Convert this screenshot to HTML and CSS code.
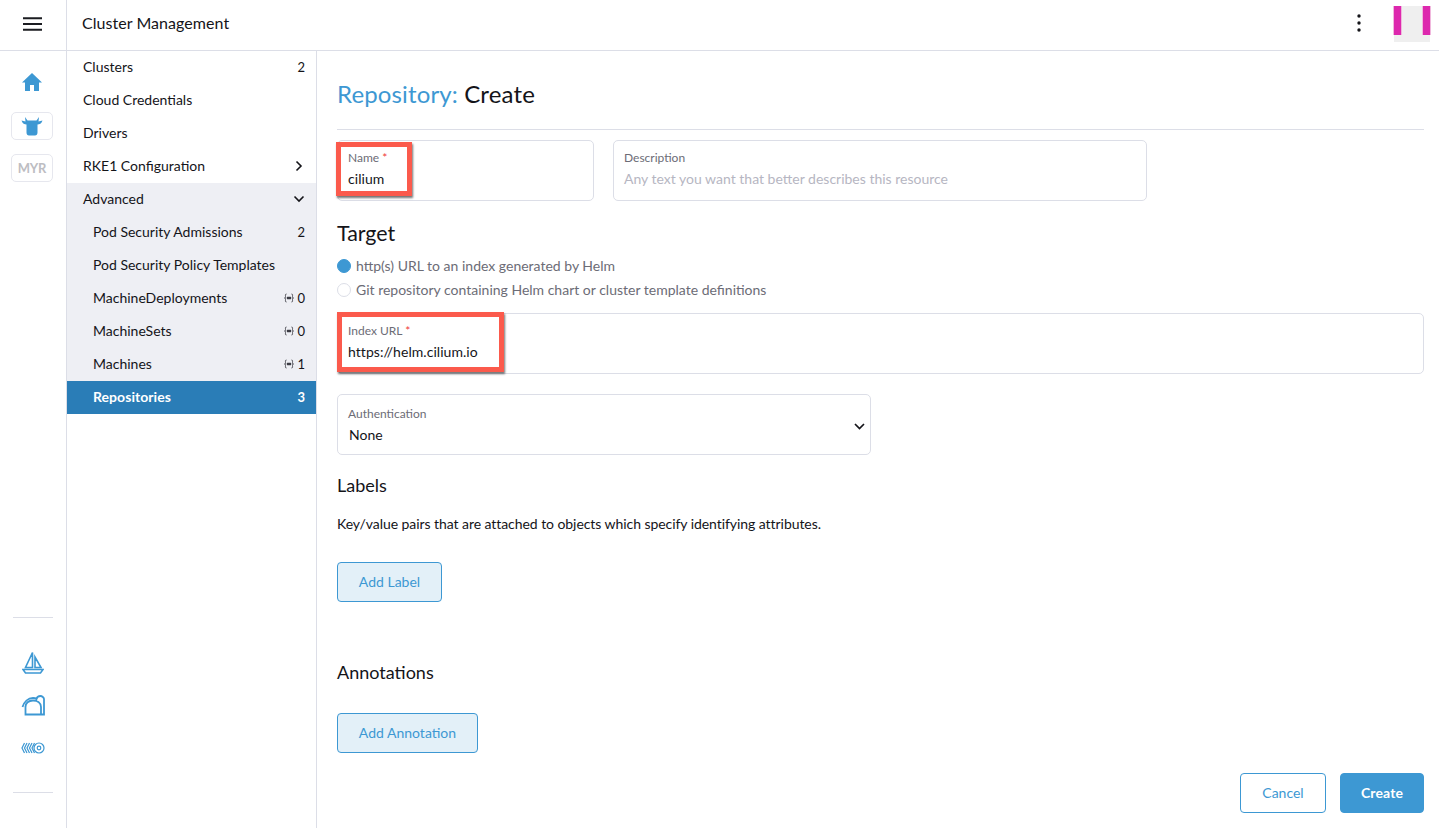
FILE: index.html
```html
<!DOCTYPE html>
<html lang="en">
<head>
<meta charset="utf-8">
<title>Repository: Create</title>
<link rel="stylesheet" href="styles.css">
</head>
<body>
<div class="app">
  <header class="top">
    <div class="burger"><svg width="20" height="14" viewBox="0 0 20 14"><path d="M0 1.2h19M0 7h19M0 12.8h19" stroke="#1b1c21" stroke-width="2"/></svg></div>
    <div class="product">Cluster Management</div>
    <div class="top-right">
      <svg class="kebab" width="4" height="18" viewBox="0 0 4 18"><circle cx="2" cy="2" r="1.7"/><circle cx="2" cy="9" r="1.7"/><circle cx="2" cy="16" r="1.7"/></svg>
      <div class="avatar"><span class="av-bar"></span><span class="av-bar"></span></div>
    </div>
  </header>
  <nav class="rail">
    <div class="rail-top">
      <svg class="home" width="22" height="20" viewBox="0 0 22 20"><path fill="#3d98d3" d="M11 1 1 10.500h3V19h5v-6h4v6h5v-8.500h3z"/></svg>
      <div class="chip"><svg width="22" height="20" viewBox="0 0 22 20"><path fill="#3d98d3" d="M.5 4.500 4.500 5.500 4 1l2.500 3.500h9L18 1l-.5 4.500 4-1C20.500 7.500 18.500 8.500 16.500 8.500v8c0 2-1 3-2.500 3H8c-1.500 0-2.500-1-2.500-3v-8C3.500 8.500 1.500 7.500.5 4.500z"/></svg></div>
      <div class="chip chip-text">MYR</div>
    </div>
    <div class="rail-bottom">
      <svg class="ic-boat" width="22" height="24" viewBox="0 0 22 24" fill="none" stroke="#3d98d3" stroke-width="1.600"><path d="M10.500 1.500 3.500 16.500h7zM13 6v10.500h6zM1 18.500h20l-2.500 3.500H3.500z"/></svg>
      <svg class="ic-arch" width="24" height="21" viewBox="0 0 24 21" fill="none" stroke="#3d98d3" stroke-width="1.800"><path d="M1.500 12C3 7 7 3 12 3c1.500 0 3 .5 3.500 1C16 2 18 1 19.500 1S23 2.500 23 4v15.500H4.500V11M4.500 19.500V12c0-4 3-6.500 7.500-6.500S20 8 20 12v7.500"/></svg>
      <svg class="ic-wheat" width="24" height="14" viewBox="0 0 24 14" fill="none" stroke="#3d98d3" stroke-width="1.200"><path d="M3.500 2 1 7l2.500 5M6 2 3.500 7 6 12M8.500 2 6 7l2.500 5M11 2 8.500 7l2.500 5M13.500 2 11 7l2.500 5"/><circle cx="18" cy="7" r="5"/><circle cx="18" cy="7" r="1.800"/></svg>
    </div>
  </nav>
  <aside class="side">
    <a class="item"><span>Clusters</span><span class="count">2</span></a>
    <a class="item"><span>Cloud Credentials</span></a>
    <a class="item"><span>Drivers</span></a>
    <a class="item"><span>RKE1 Configuration</span><svg class="chev" width="8" height="12" viewBox="0 0 8 12"><path d="m1.500 1.500 4.500 4.500-4.500 4.500" fill="none" stroke="#141419" stroke-width="1.600"/></svg></a>
    <div class="group">
      <a class="item"><span>Advanced</span><svg class="chev-d" width="12" height="8" viewBox="0 0 12 8"><path d="m1.500 1.500 4.500 4.500 4.500-4.500" fill="none" stroke="#141419" stroke-width="1.600"/></svg></a>
      <a class="item sub"><span>Pod Security Admissions</span><span class="count">2</span></a>
      <a class="item sub"><span>Pod Security Policy Templates</span></a>
      <a class="item sub"><span>MachineDeployments</span><span class="count"><svg class="ns" width="10" height="10" viewBox="0 0 10 10"><path d="M2.500 1C1 1 1.500 2.500 1.500 3.500S1.500 5 .5 5c1 0 1 .5 1 1.500S1 9 2.500 9M7.500 1C9 1 8.500 2.500 8.500 3.500S8.500 5 9.500 5c-1 0-1 .5-1 1.500S9 9 7.500 9" fill="none" stroke="#3c3c44" stroke-width=".9"/><rect x="2.800" y="3.800" width="4.400" height="2.400" rx=".6" fill="#3c3c44"/></svg>0</span></a>
      <a class="item sub"><span>MachineSets</span><span class="count"><svg class="ns" width="10" height="10" viewBox="0 0 10 10"><path d="M2.500 1C1 1 1.500 2.500 1.500 3.500S1.500 5 .5 5c1 0 1 .5 1 1.500S1 9 2.500 9M7.500 1C9 1 8.500 2.500 8.500 3.500S8.500 5 9.500 5c-1 0-1 .5-1 1.500S9 9 7.500 9" fill="none" stroke="#3c3c44" stroke-width=".9"/><rect x="2.800" y="3.800" width="4.400" height="2.400" rx=".6" fill="#3c3c44"/></svg>0</span></a>
      <a class="item sub"><span>Machines</span><span class="count"><svg class="ns" width="10" height="10" viewBox="0 0 10 10"><path d="M2.500 1C1 1 1.500 2.500 1.500 3.500S1.500 5 .5 5c1 0 1 .5 1 1.500S1 9 2.500 9M7.500 1C9 1 8.500 2.500 8.500 3.500S8.500 5 9.500 5c-1 0-1 .5-1 1.500S9 9 7.500 9" fill="none" stroke="#3c3c44" stroke-width=".9"/><rect x="2.800" y="3.800" width="4.400" height="2.400" rx=".6" fill="#3c3c44"/></svg>1</span></a>
      <a class="item sub active"><span>Repositories</span><span class="count">3</span></a>
    </div>
  </aside>
  <main class="main">
    <h1 class="title"><span class="accent">Repository:</span> Create</h1>
    <div class="name-row">
      <div class="field name">
        <label>Name <em>*</em></label><div class="val">cilium</div>
        <span class="mark mark-name"></span>
      </div>
      <div class="field desc">
        <label>Description</label><div class="val ph">Any text you want that better describes this resource</div>
      </div>
    </div>
    <h2 class="target">Target</h2>
    <div class="radio"><span class="dot on"></span>http(s) URL to an index generated by Helm</div>
    <div class="radio r2"><span class="dot"></span>Git repository containing Helm chart or cluster template definitions</div>
    <div class="field url">
      <label>Index URL <em>*</em></label><div class="val">https://helm.cilium.io</div>
      <span class="mark mark-url"></span>
    </div>
    <div class="field auth">
      <label>Authentication</label><div class="val">None</div>
      <svg class="sel" width="11" height="7" viewBox="0 0 11 7"><path d="m1 1 4.500 4.500L10 1" fill="none" stroke="#141419" stroke-width="1.700"/></svg>
    </div>
    <h3 class="labels">Labels</h3>
    <p class="help">Key/value pairs that are attached to objects which specify identifying attributes.</p>
    <button class="btn soft add-label">Add Label</button>
    <h3 class="annot">Annotations</h3>
    <button class="btn soft add-annot">Add Annotation</button>
    <div class="actions">
      <button class="btn outline cancel">Cancel</button>
      <button class="btn primary create">Create</button>
    </div>
  </main>
</div>
</body>
</html>
```
FILE: styles.css
```css
* { box-sizing: border-box; }
html, body { margin: 0; height: 100%; background: #fff; overflow: hidden; }
body { font-family: Lato, "Open Sans", sans-serif; font-size: 14px; color: #141419; }
.app {
  display: grid;
  grid-template-columns: 67px 250px 1fr;
  grid-template-rows: 51px 777px;
  width: 1439px;
  height: 828px;
}
.top {
  grid-column: 1 / 4;
  display: flex;
  align-items: center;
  border-bottom: 1px solid #dcdee7;
}
.burger {
  width: 67px;
  height: 50px;
  border-right: 1px solid #dcdee7;
  display: flex;
  align-items: center;
  justify-content: center;
}
.burger svg { margin-right: 1px; margin-top: -2px; }
.product { font-size: 16px; letter-spacing: .05px; margin-left: 15px; margin-top: -5px; }
.top-right { margin-left: auto; display: flex; align-items: flex-start; height: 50px; padding-right: 9px; }
.kebab { fill: #141419; margin-top: 14px; margin-right: 33px; }
.avatar {
  width: 36px;
  height: 36px;
  margin-top: 6px;
  background: #efefef;
  display: flex;
  justify-content: space-between;
  align-items: flex-start;
}
.av-bar { width: 7px; height: 29px; background: #dd28ae; box-shadow: 1px 0 0 #f0b8dd, -1px 0 0 #f0b8dd; }
.rail {
  border-right: 1px solid #dcdee7;
  display: flex;
  flex-direction: column;
  align-items: center;
  justify-content: space-between;
  padding: 21px 0 35px;
}
.rail-top { display: flex; flex-direction: column; align-items: center; }
.home { margin-right: 2px; margin-bottom: 20px; }
.chip {
  width: 42px;
  height: 28px;
  border: 1px solid #e6e7ee;
  border-radius: 5px;
  display: flex;
  align-items: center;
  justify-content: center;
  margin-bottom: 14px;
  margin-right: 2px;
}
.chip-text { font-size: 13px; font-weight: 700; color: #bdbdc2; letter-spacing: -.2px; }
.rail-bottom {
  width: 40px;
  height: 176px;
  border-top: 1px solid #dcdee7;
  border-bottom: 1px solid #dcdee7;
  display: flex;
  flex-direction: column;
  align-items: center;
  padding-top: 33px;
}
.ic-arch { margin-top: 20px; }
.ic-wheat { margin-top: 25px; }
.side { border-right: 1px solid #dcdee7; }
.item {
  height: 33px;
  display: flex;
  align-items: center;
  justify-content: space-between;
  padding: 0 11px 1px 16px;
  line-height: 1;
}
.group { background: #eeeff4; }
.chev { margin-right: 2px; }
.chev-d { margin-right: 0; }
.sub { padding-left: 26px; }
.count { display: flex; align-items: center; font-size: 13px; }
.ns { margin-right: 3px; }
.active { background: #2a7db7; color: #fff; font-weight: 700; letter-spacing: .05px; }
.main { padding: 0 15px 0 20px; position: relative; }
.title {
  margin: 0;
  height: 79px;
  padding-top: 26px;
  font-size: 24px;
  letter-spacing: .14px;
  font-weight: 400;
  line-height: 33px;
  border-bottom: 1px solid #dcdee7;
}
.accent { color: #3d98d3; }
.field {
  position: relative;
  height: 61px;
  border: 1px solid #dcdee7;
  border-radius: 5px;
  padding: 10px 10px 0;
}
.field label { display: block; font-size: 12px; line-height: 14px; color: #6c6c76; }
.field em { color: #f03a3a; font-style: normal; }
.val { font-size: 14px; letter-spacing: .05px; line-height: 17px; margin-top: 5px; }
.ph { color: #b6b6c2; letter-spacing: 0; }
.name-row { display: flex; gap: 19px; margin-top: 10px; }
.name { width: 257px; }
.desc { width: 534px; }
.target { margin: 18px 0 0; font-size: 21.400px; font-weight: 400; line-height: 28px; }
.radio { display: flex; align-items: center; color: #6c6c76; line-height: 17px; height: 17px; margin-top: 10px; }
.r2 { margin-top: 7px; }
.dot {
  width: 14px;
  height: 14px;
  border-radius: 50%;
  border: 1px solid #dcdee7;
  margin-right: 5px;
}
.dot.on { background: #3d98d3; border-color: #3d98d3; }
.url { margin-top: 15px; }
.auth { width: 534px; margin-top: 20px; padding-top: 11px; }
.auth .val { margin-left: 1px; }
.auth label { margin-top: 1px; }
.sel { position: absolute; right: 5px; top: 28px; }
.mark {
  position: absolute;
  border: 5px solid #fb5a4c;
  box-shadow: 1px 2px 2px rgba(0, 0, 0, .55);
  pointer-events: none;
}
.mark-name { left: -2px; top: 1px; width: 76px; height: 54px; }
.mark-url { left: -1px; top: -2px; width: 167px; height: 60px; }
.labels, .annot { font-size: 18px; font-weight: 400; line-height: 24px; margin: 0; }
.labels { margin-top: 18px; }
.help { margin: 18px 0 0; line-height: 17px; letter-spacing: -.06px; }
.btn {
  display: block;
  height: 40px;
  border-radius: 4px;
  font-family: inherit;
  font-size: 14px;
  padding: 0 0 2px;
  color: #3d98d3;
  border: 1px solid #3d98d3;
  background: #fff;
}
.soft { background: #e3f0f8; }
.add-label { width: 105px; margin-top: 30px; }
.annot { margin-top: 58px; }
.add-annot { width: 141px; margin-top: 29px; }
.actions { display: flex; justify-content: flex-end; gap: 14px; margin-top: 20px; }
.cancel { width: 86px; }
.create { width: 84px; background: #3d98d3; color: #fff; font-weight: 700; letter-spacing: .1px; }
```
